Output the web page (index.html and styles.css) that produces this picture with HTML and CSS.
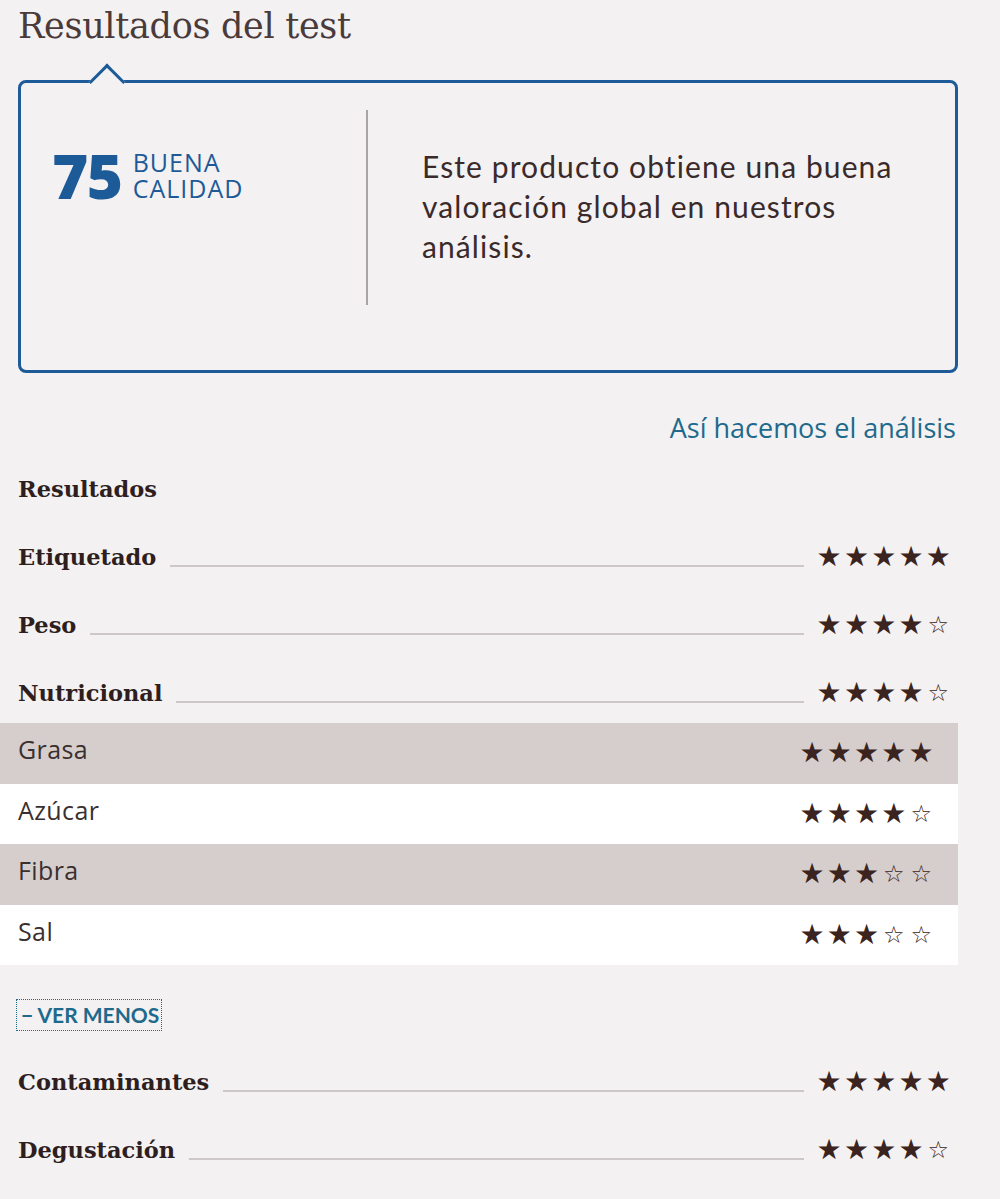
FILE: index.html
```html
<!DOCTYPE html>
<html lang="es">
<head>
    <meta charset="UTF-8">
    <meta name="viewport" content="width=device-width, initial-scale=1.0">
    <title>Resultados del test</title>
    <link rel="stylesheet" href="styles.css">
</head>
<body>
    <div class="page">
        <h1 class="title">Resultados del test</h1>

        <div class="card">
            <span class="notch"></span>
            <div class="score">
                <span class="score-num">75</span>
                <span class="score-label">
                    <span>BUENA</span>
                    <span>CALIDAD</span>
                </span>
            </div>
            <div class="divider"></div>
            <p class="summary">Este producto obtiene una buena valoración global en nuestros análisis.</p>
        </div>

        <div class="method"><a href="#">Así hacemos el análisis</a></div>

        <div class="row heading">Resultados</div>

        <div class="row">
            <span class="label">Etiquetado</span>
            <span class="rule"></span>
            <span class="stars"><span>★</span><span>★</span><span>★</span><span>★</span><span>★</span></span>
        </div>
        <div class="row">
            <span class="label">Peso</span>
            <span class="rule"></span>
            <span class="stars"><span>★</span><span>★</span><span>★</span><span>★</span><span class="off">☆</span></span>
        </div>
        <div class="row">
            <span class="label">Nutricional</span>
            <span class="rule"></span>
            <span class="stars"><span>★</span><span>★</span><span>★</span><span>★</span><span class="off">☆</span></span>
        </div>

        <div class="sub-list">
            <div class="sub-row shaded">
                <span>Grasa</span>
                <span class="stars"><span>★</span><span>★</span><span>★</span><span>★</span><span>★</span></span>
            </div>
            <div class="sub-row">
                <span>Azúcar</span>
                <span class="stars"><span>★</span><span>★</span><span>★</span><span>★</span><span class="off">☆</span></span>
            </div>
            <div class="sub-row shaded">
                <span>Fibra</span>
                <span class="stars"><span>★</span><span>★</span><span>★</span><span class="off">☆</span><span class="off">☆</span></span>
            </div>
            <div class="sub-row">
                <span>Sal</span>
                <span class="stars"><span>★</span><span>★</span><span>★</span><span class="off">☆</span><span class="off">☆</span></span>
            </div>
        </div>

        <a href="#" class="toggle">− VER MENOS</a>

        <div class="row">
            <span class="label">Contaminantes</span>
            <span class="rule"></span>
            <span class="stars"><span>★</span><span>★</span><span>★</span><span>★</span><span>★</span></span>
        </div>
        <div class="row">
            <span class="label">Degustación</span>
            <span class="rule"></span>
            <span class="stars"><span>★</span><span>★</span><span>★</span><span>★</span><span class="off">☆</span></span>
        </div>
    </div>
</body>
</html>
```

FILE: styles.css
```css
* {
    margin: 0;
    padding: 0;
    box-sizing: border-box;
}
body {
    background: #f3f1f2;
    color: #3a2a2a;
    font-family: 'Open Sans', sans-serif;
}
.page {
    width: 958px;
    padding-top: 4px;
}
.title {
    margin-left: 18px;
    font-family: 'DejaVu Serif', serif;
    font-weight: normal;
    font-size: 35px;
    line-height: 44px;
    color: #4a3a3a;
    letter-spacing: -0.3px;
}
.card {
    position: relative;
    display: flex;
    margin: 32px 0 0 18px;
    padding: 27px 0 65px 31px;
    border: 3px solid #1d5a98;
    border-radius: 8px;
}
.notch {
    position: absolute;
    top: -14.5px;
    left: 73px;
    width: 26px;
    height: 26px;
    background: #f3f1f2;
    border-top: 3px solid #1d5a98;
    border-left: 3px solid #1d5a98;
    transform: rotate(45deg);
}
.score {
    display: flex;
    align-items: center;
    width: 314px;
    height: 90px;
    margin-top: 20px;
    color: #1d5a98;
}
.score-num {
    font-weight: 800;
    font-size: 62px;
    letter-spacing: -1.5px;
    line-height: 1;
}
.score-label {
    display: flex;
    flex-direction: column;
    margin-left: 11px;
    font-size: 25px;
    line-height: 26px;
    letter-spacing: 1px;
}
.divider {
    width: 2px;
    height: 195px;
    background: #a9a4a4;
}
.summary {
    width: 540px;
    padding: 36px 0 0 54px;
    font-family: 'Lato', sans-serif;
    font-size: 30px;
    line-height: 40px;
    letter-spacing: 1.1px;
    color: #3a2a2a;
}
.method {
    margin-top: 40px;
    padding-right: 2px;
    text-align: right;
    font-size: 27px;
    line-height: 30px;
}
.method a {
    color: #1e6a8c;
    text-decoration: none;
}
.row {
    display: flex;
    align-items: center;
    height: 60px;
    margin: 8px 0 0 18px;
    font-family: 'DejaVu Serif', serif;
    font-weight: bold;
    font-size: 22.5px;
    color: #2e1e1e;
}
.heading {
    margin-top: 16px;
}
.rule {
    flex: 1;
    height: 2px;
    margin: 18px 12px 0 14px;
    background: #cdc7c7;
}
.stars {
    display: flex;
    align-items: center;
    font-family: 'DejaVu Sans', sans-serif;
    font-weight: normal;
    font-size: 28px;
    line-height: 1;
    color: #3b2420;
}
.stars span {
    width: 27.3px;
    text-align: center;
}
.stars .off {
    font-size: 24px;
}
.row .stars {
    margin-right: 6px;
}
.sub-row {
    display: flex;
    align-items: center;
    justify-content: space-between;
    height: 60.5px;
    padding: 0 23px 8px 18px;
    background: #fff;
    font-size: 25px;
    letter-spacing: 0.4px;
    color: #3a3030;
}
.sub-row.shaded {
    background: #d6cecd;
}
.sub-row .stars {
    margin-top: 8px;
}
.toggle {
    display: inline-block;
    margin: 35px 0 0 17px;
    padding: 3px 2px 3px 4px;
    outline: 1px dotted #1e6a8c;
    font-family: 'Lato', sans-serif;
    font-weight: bold;
    font-size: 21px;
    line-height: 24px;
    color: #1e6a8c;
    text-decoration: none;
}
.toggle + .row {
    margin-top: 22px;
}
```
